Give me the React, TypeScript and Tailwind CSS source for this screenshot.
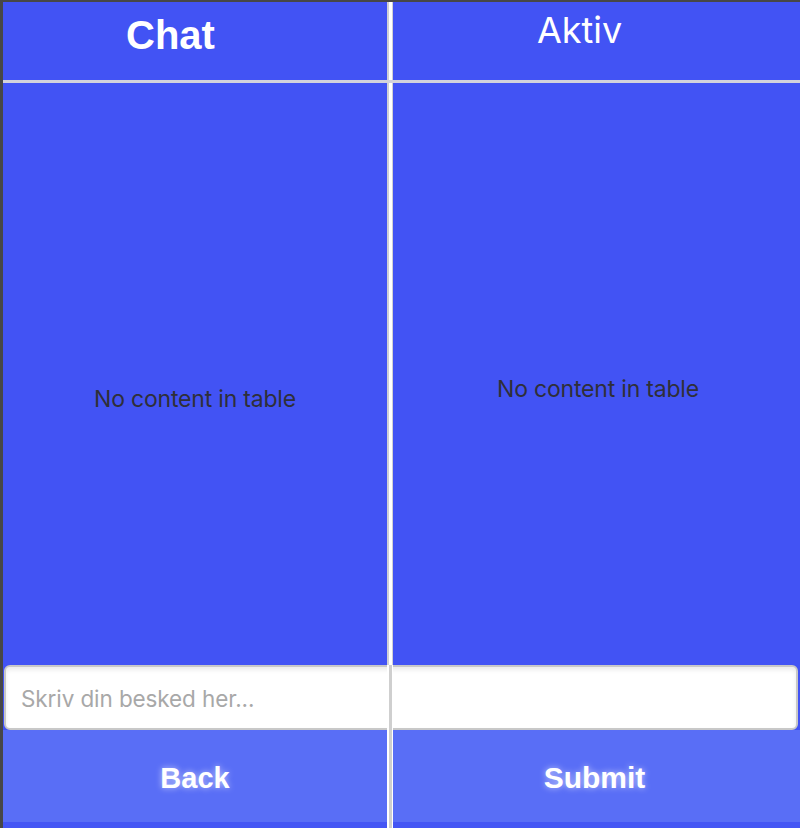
import React from "react";

export default function App() {
  const inter = { fontFamily: "Inter, 'Noto Sans', sans-serif" };
  const arial = { fontFamily: "'Liberation Sans', Arial, sans-serif" };
  return (
    <div className="w-[800px] h-[828px] bg-[#474747] pl-[3px] pt-[2px] overflow-hidden">
      <div className="grid h-full grid-cols-[384px_6px_1fr] grid-rows-[78px_3px_1fr_65px_92px_6px] bg-[#4253f4]">
        {/* header left */}
        <div className="col-start-1 row-start-1 pt-[13px] pl-[123px]">
          <div className="text-[40px] leading-none font-bold text-white" style={arial}>
            Chat
          </div>
        </div>
        {/* header right */}
        <div className="col-start-3 row-start-1 pt-[10px] pl-[144px]">
          <div className="text-[36px] leading-none text-white" style={inter}>
            Aktiv
          </div>
        </div>

        {/* vertical divider upper */}
        <div className="col-start-2 row-start-1 row-span-3 z-10 bg-white border-l-2 border-r border-[#d0d0d4]" />
        {/* vertical divider lower */}
        <div className="col-start-2 row-start-4 row-span-3 z-30 flex justify-center bg-white">
          <div className="w-[3px] h-full bg-[#cfcfcf]" />
        </div>

        {/* horizontal line */}
        <div className="col-start-1 col-span-3 row-start-2 z-20 bg-[#d2d2dc]" />

        {/* content left */}
        <div className="col-start-1 row-start-3 flex items-center justify-center pt-[51px]">
          <div className="text-[23px] tracking-[-0.2px] text-[#2f2f38]" style={inter}>
            No content in table
          </div>
        </div>
        {/* content right */}
        <div className="col-start-3 row-start-3 flex items-center justify-center pt-[31px] pl-[3px]">
          <div className="text-[23px] tracking-[-0.2px] text-[#2f2f38]" style={inter}>
            No content in table
          </div>
        </div>

        {/* input */}
        <div className="col-start-1 col-span-3 row-start-4 z-20 pl-[1px] pr-[2px]">
          <input
            placeholder="Skriv din besked her..."
            className="w-full h-full rounded-[6px] border-2 border-[#c8c8c8] bg-white pl-[15px] pt-[2px] text-[22.5px] tracking-[-0.1px] text-[#333] placeholder:text-[#a8a8a8] outline-none shadow-[inset_0_3px_4px_rgba(0,0,0,0.08)]"
            style={inter}
          />
        </div>

        {/* buttons */}
        <div className="col-start-1 row-start-5 bg-[#596ef6] flex items-center justify-center pt-[6px]">
          <span
            className="text-[29px] font-bold text-white [text-shadow:0_0_6px_rgba(255,255,255,0.6)]"
            style={arial}
          >
            Back
          </span>
        </div>
        <div className="col-start-3 row-start-5 bg-[#596ef6] flex items-center justify-center pt-[2px] pr-[4px]">
          <span
            className="text-[30px] font-bold text-white [text-shadow:0_0_6px_rgba(255,255,255,0.6)]"
            style={arial}
          >
            Submit
          </span>
        </div>
        <div className="col-start-1 row-start-6 bg-[#4456f4]" />
        <div className="col-start-3 row-start-6 bg-[#4456f4]" />
      </div>
    </div>
  );
}
